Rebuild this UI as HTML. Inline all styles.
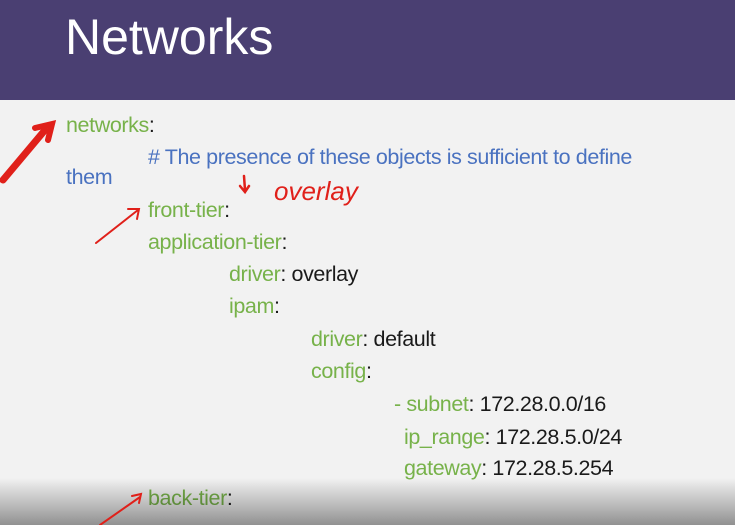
<!DOCTYPE html>
<html><head><style>
body{margin:0;width:735px;height:525px;overflow:hidden;background:#f2f2f2;font-family:"Liberation Sans",sans-serif;position:relative}
.hd{position:absolute;left:0;top:0;width:735px;height:100px;background:#4a3f72}
.hd div{position:absolute;left:65px;top:8px;color:#fff;font-size:50px}
.l{position:absolute;font-size:21.5px;white-space:nowrap;line-height:24px;color:#1a1a1a;letter-spacing:-0.4px}
.g{color:#77b24a}.b{color:#4a72c0}
.fade{position:absolute;left:0;top:478px;width:735px;height:47px;background:linear-gradient(rgba(0,0,0,0),rgba(0,0,0,0.4))}
</style></head><body>
<div class="hd"><div>Networks</div></div>
<div class="l" style="left:66px;top:113px"><span class="g">networks</span>:</div>
<div class="l b" style="left:148px;top:145px"># The presence of these objects is sufficient to define</div>
<div class="l b" style="left:66px;top:165px">them</div>
<div class="l" style="left:148px;top:198px"><span class="g">front-tier</span>:</div>
<div class="l" style="left:148px;top:230px"><span class="g">application-tier</span>:</div>
<div class="l" style="left:229px;top:262px"><span class="g">driver</span>: overlay</div>
<div class="l" style="left:229px;top:294px"><span class="g">ipam</span>:</div>
<div class="l" style="left:311px;top:327px"><span class="g">driver</span>: default</div>
<div class="l" style="left:311px;top:359px"><span class="g">config</span>:</div>
<div class="l" style="left:394px;top:392px"><span class="g">- subnet</span>: 172.28.0.0/16</div>
<div class="l" style="left:404px;top:425px"><span class="g">ip_range</span>: 172.28.5.0/24</div>
<div class="l" style="left:404px;top:456px"><span class="g">gateway</span>: 172.28.5.254</div>
<div class="l" style="left:148px;top:486px"><span class="g">back-tier</span>:</div>
<div class="fade"></div>
<svg style="position:absolute;left:0;top:0" width="735" height="525" fill="none" stroke="#e0201a" stroke-linecap="round">
<path d="M3 180 L45 130" stroke-width="7"/><path d="M35 128 L52 124 L48 140" stroke-width="6"/>
<path d="M96 243 L138 210" stroke-width="2"/><path d="M128 209 L139 209 L137 219" stroke-width="2"/>
<path d="M244 176 L245 190 M240 186 L245 192 L249 186" stroke-width="2.5"/>
<text x="274" y="200" fill="#e0201a" stroke="none" font-family="Liberation Sans" font-size="26" font-style="italic">overlay</text>
<path d="M100 525 L140 497 M132 496 L141 494 L139 503" stroke-width="2"/>
</svg>
</body></html>
